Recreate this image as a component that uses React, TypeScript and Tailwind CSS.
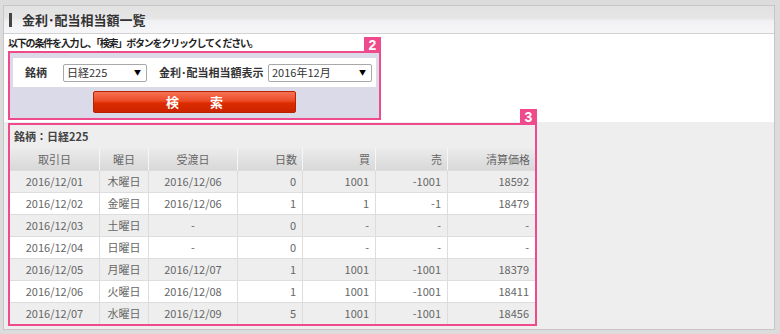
import React from "react";

const font = { fontFamily: '"Noto Sans CJK JP", "Noto Sans", sans-serif' };

const columns = [
  { label: "取引日", width: "w-[89px]", align: "center" },
  { label: "曜日", width: "w-[49px]", align: "center" },
  { label: "受渡日", width: "w-[89px]", align: "center" },
  { label: "日数", width: "w-[65px]", align: "right" },
  { label: "買", width: "w-[73px]", align: "right" },
  { label: "売", width: "w-[72px]", align: "right" },
  { label: "清算価格", width: "w-[88px]", align: "right" },
];

const rows = [
  ["2016/12/01", "木曜日", "2016/12/06", "0", "1001", "-1001", "18592"],
  ["2016/12/02", "金曜日", "2016/12/06", "1", "1", "-1", "18479"],
  ["2016/12/03", "土曜日", "-", "0", "-", "-", "-"],
  ["2016/12/04", "日曜日", "-", "0", "-", "-", "-"],
  ["2016/12/05", "月曜日", "2016/12/07", "1", "1001", "-1001", "18379"],
  ["2016/12/06", "火曜日", "2016/12/08", "1", "1001", "-1001", "18411"],
  ["2016/12/07", "水曜日", "2016/12/09", "5", "1001", "-1001", "18456"],
];

function Badge({ n }: { n: string }) {
  return (
    <span
      className="absolute right-[-2px] top-[-16px] flex h-[16px] w-[17px] items-center justify-center bg-[#ef4a8c] text-[14px] font-bold leading-none text-white"
      style={{ fontFamily: '"Liberation Sans", Arial, sans-serif' }}
    >
      {n}
    </span>
  );
}

function FakeSelect({ value, width }: { value: string; width: string }) {
  return (
    <div className={`${width} flex h-[18px] items-center justify-between rounded-[2px] border border-[#a8a8a8] bg-white pl-[3px] pr-[5px] text-[11px] text-[#333]`}>
      <span>{value}</span>
      <span className="text-[7px] text-black">▼</span>
    </div>
  );
}

export default function App() {
  return (
    <div className="h-[334px] w-[780px] bg-[#dcdcdc] pb-[4px] pl-[3px] pr-[5px] pt-[5px]" style={font}>
      <div className="flex h-full flex-col border border-[#c6c6c6] bg-white">
        <div className="flex h-[28px] items-center border-b border-[#d2d2d2] bg-[linear-gradient(#e2e2e2_0%,#e5e5e5_45%,#f1f1f3_55%,#f6f6f8_100%)] pl-[5px]">
          <span className="h-[14px] w-[3px] bg-[#444]" />
          <span className="ml-[10px] text-[13px] font-bold text-[#333]">金利･配当相当額一覧</span>
        </div>

        <div className="h-[17px] pl-[4px] pt-[3px] text-[10px] font-bold leading-[12px] tracking-[-1.2px] text-[#222]">
          以下の条件を入力し、「検索」ボタンをクリックしてください。
        </div>

        <div className="pl-[4px]">
          <div className="relative w-[373px] border-2 border-[#ef4a8c] bg-[#dadae8] px-[3px] pb-[5px] pt-[5px]">
            <Badge n="2" />
            <div className="flex h-[29px] items-center bg-white pl-[12px]">
              <span className="w-[38px] text-[11px] font-bold text-[#333]">銘柄</span>
              <FakeSelect value="日経225" width="w-[84px]" />
              <span className="ml-[12px] w-[109px] text-[11px] font-bold text-[#333]">金利･配当相当額表示</span>
              <FakeSelect value="2016年12月" width="w-[104px]" />
            </div>
            <div className="mt-[4px] flex justify-center">
              <button className="flex h-[22px] w-[203px] items-center justify-center gap-[31px] rounded-[2px] border border-[#b82200] bg-[linear-gradient(#f57356_0%,#ec4a26_45%,#dc2c00_55%,#cc2400_100%)] text-[13px] font-bold text-white">
                <span>検</span>
                <span>索</span>
              </button>
            </div>
          </div>
        </div>

        <div className="mt-[2px] flex-1 bg-[#eeeeee] pl-[4px] pt-[1px]">
          <div className="relative w-[529px] border-2 border-[#ef4a8c] bg-[#eeeeee]">
            <Badge n="3" />
            <div className="flex h-[23px] items-center pl-[4px] text-[11px] font-bold text-[#444]">銘柄：日経225</div>
            <div className="flex h-[22px] bg-[linear-gradient(#ececec,#d8d8d8)] text-[11px] text-[#666]">
              {columns.map((c, i) => (
                <div
                  key={c.label}
                  className={`${c.width} flex items-center ${c.align === "center" ? "justify-center" : "justify-end pr-[5px]"} ${i > 0 ? "border-l border-[#f6f6f6]" : ""}`}
                >
                  {c.label}
                </div>
              ))}
            </div>
            {rows.map((r, ri) => (
              <div key={ri} className={`flex h-[22px] border-t border-[#dddddd] text-[11px] text-[#666] ${ri % 2 === 0 ? "bg-[#eeeeee]" : "bg-white"}`}>
                {r.map((v, ci) => (
                  <div
                    key={ci}
                    className={`${columns[ci].width} flex items-center ${columns[ci].align === "center" ? "justify-center" : "justify-end pr-[6px]"} ${ci > 0 ? "border-l border-[#dddddd]" : ""}`}
                  >
                    {v}
                  </div>
                ))}
              </div>
            ))}
          </div>
        </div>
      </div>
    </div>
  );
}
